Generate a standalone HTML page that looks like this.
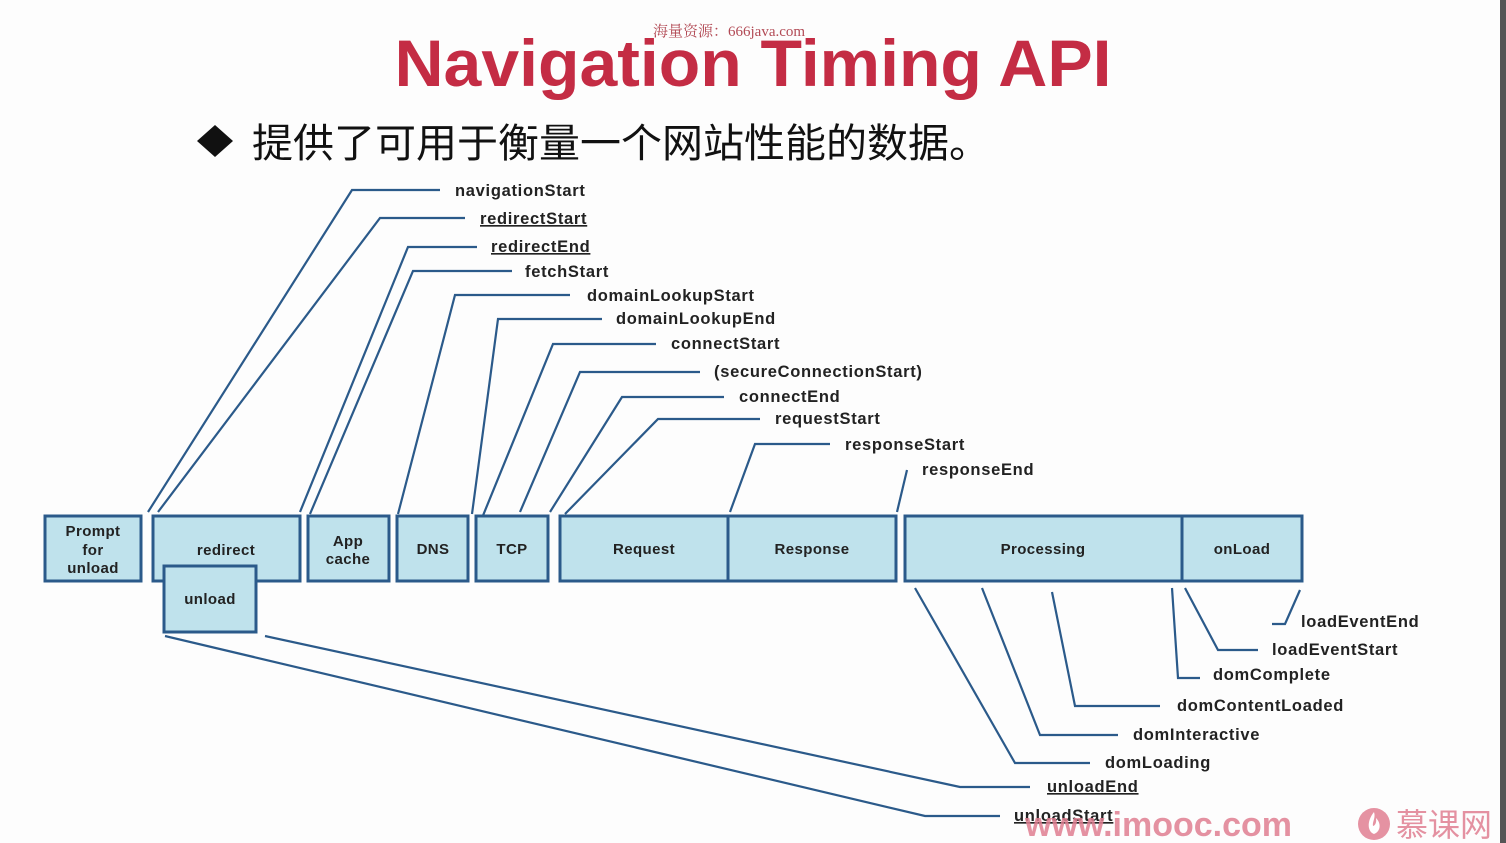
<!DOCTYPE html>
<html><head><meta charset="utf-8"><style>
html,body{margin:0;padding:0;background:#fff;}
svg{display:block;}
</style></head><body>
<svg width="1506" height="843" viewBox="0 0 1506 843" xmlns="http://www.w3.org/2000/svg" font-family="Liberation Sans, sans-serif">
<rect width="1506" height="843" fill="#fdfdfd"/>
<rect x="1500" y="0" width="6" height="843" fill="#555"/>
<text x="753" y="86" text-anchor="middle" font-size="66" font-weight="bold" fill="#c42c44" textLength="717" lengthAdjust="spacingAndGlyphs">Navigation Timing API</text>
<text x="653" y="36" font-size="15" fill="#b24a55" font-family="Liberation Serif, Noto Serif CJK SC, serif">海量资源：666java.com</text>
<path d="M215 125 L233 141 L215 157 L197 141 Z" fill="#111"/>
<text x="252" y="157" font-size="40" fill="#111" font-family="Liberation Sans, Noto Sans CJK SC, sans-serif" textLength="738" lengthAdjust="spacingAndGlyphs">提供了可用于衡量一个网站性能的数据。</text>
<g fill="none" stroke="#2b5a8a" stroke-width="2.2">
<polyline points="148,512 352,190 440,190"/>
<polyline points="158,512 380,218 465,218"/>
<polyline points="300,512 408,247 477,247"/>
<polyline points="310,514 413,271 512,271"/>
<polyline points="398,514 455,295 570,295"/>
<polyline points="472,514 498,319 602,319"/>
<polyline points="482,518 553,344 656,344"/>
<polyline points="520,512 580,372 700,372"/>
<polyline points="550,512 622,397 724,397"/>
<polyline points="565,514 658,419 760,419"/>
<polyline points="730,512 755,444 830,444"/>
<polyline points="897,512 907,470"/>
<polyline points="1272,624 1285,624 1300,590"/>
<polyline points="1258,650 1218,650 1185,588"/>
<polyline points="1200,678 1178,678 1172,588"/>
<polyline points="1160,706 1075,706 1052,592"/>
<polyline points="1118,735 1040,735 982,588"/>
<polyline points="1090,763 1015,763 915,588"/>
<polyline points="1030,787 960,787 265,636"/>
<polyline points="1000,816 925,816 165,636"/>
</g>
<g fill="#bfe2ec" stroke="#2b5a8a" stroke-width="3">
<rect x="45" y="516" width="96" height="65"/>
<rect x="153" y="516" width="147" height="65"/>
<rect x="308" y="516" width="81" height="65"/>
<rect x="397" y="516" width="71" height="65"/>
<rect x="476" y="516" width="72" height="65"/>
<rect x="560" y="516" width="168" height="65"/>
<rect x="728" y="516" width="168" height="65"/>
<rect x="905" y="516" width="277" height="65"/>
<rect x="1182" y="516" width="120" height="65"/>
<rect x="164" y="566" width="92" height="66"/>
</g>
<g font-size="15" font-weight="bold" fill="#222" text-anchor="middle" letter-spacing="0.4">
<text x="93" y="536">Prompt</text><text x="93" y="555">for</text><text x="93" y="573">unload</text>
<text x="226" y="555">redirect</text>
<text x="348" y="546">App</text><text x="348" y="564">cache</text>
<text x="433" y="554">DNS</text>
<text x="512" y="554">TCP</text>
<text x="644" y="554">Request</text>
<text x="812" y="554">Response</text>
<text x="1043" y="554">Processing</text>
<text x="1242" y="554">onLoad</text>
<text x="210" y="604">unload</text>
</g>
<g font-size="16.5" font-weight="bold" fill="#222" letter-spacing="0.7">
<text x="455" y="196">navigationStart</text>
<text x="480" y="224" text-decoration="underline">redirectStart</text>
<text x="491" y="252" text-decoration="underline">redirectEnd</text>
<text x="525" y="277">fetchStart</text>
<text x="587" y="301">domainLookupStart</text>
<text x="616" y="324">domainLookupEnd</text>
<text x="671" y="349">connectStart</text>
<text x="714" y="377">(secureConnectionStart)</text>
<text x="739" y="402">connectEnd</text>
<text x="775" y="424">requestStart</text>
<text x="845" y="450">responseStart</text>
<text x="922" y="475">responseEnd</text>
<text x="1301" y="627">loadEventEnd</text>
<text x="1272" y="655">loadEventStart</text>
<text x="1213" y="680">domComplete</text>
<text x="1177" y="711">domContentLoaded</text>
<text x="1133" y="740">domInteractive</text>
<text x="1105" y="768">domLoading</text>
<text x="1047" y="792" text-decoration="underline">unloadEnd</text>
<text x="1014" y="821" text-decoration="underline">unloadStart</text>
</g>
<text x="1025" y="836" font-size="34" font-weight="bold" fill="#e07f92" opacity="0.85">www.imooc.com</text>
<circle cx="1374" cy="824" r="16" fill="#e07f92" opacity="0.85"/>
<path d="M1374 812 C1366 822 1368 832 1374 834 C1380 832 1382 824 1376 818 C1377 824 1374 826 1373 826 C1372 822 1376 818 1374 812Z" fill="#fff"/>
<text x="1396" y="836" font-size="32" fill="#e07f92" opacity="0.85" font-family="Liberation Sans, Noto Sans CJK SC, sans-serif">慕课网</text>
</svg>
</body></html>
